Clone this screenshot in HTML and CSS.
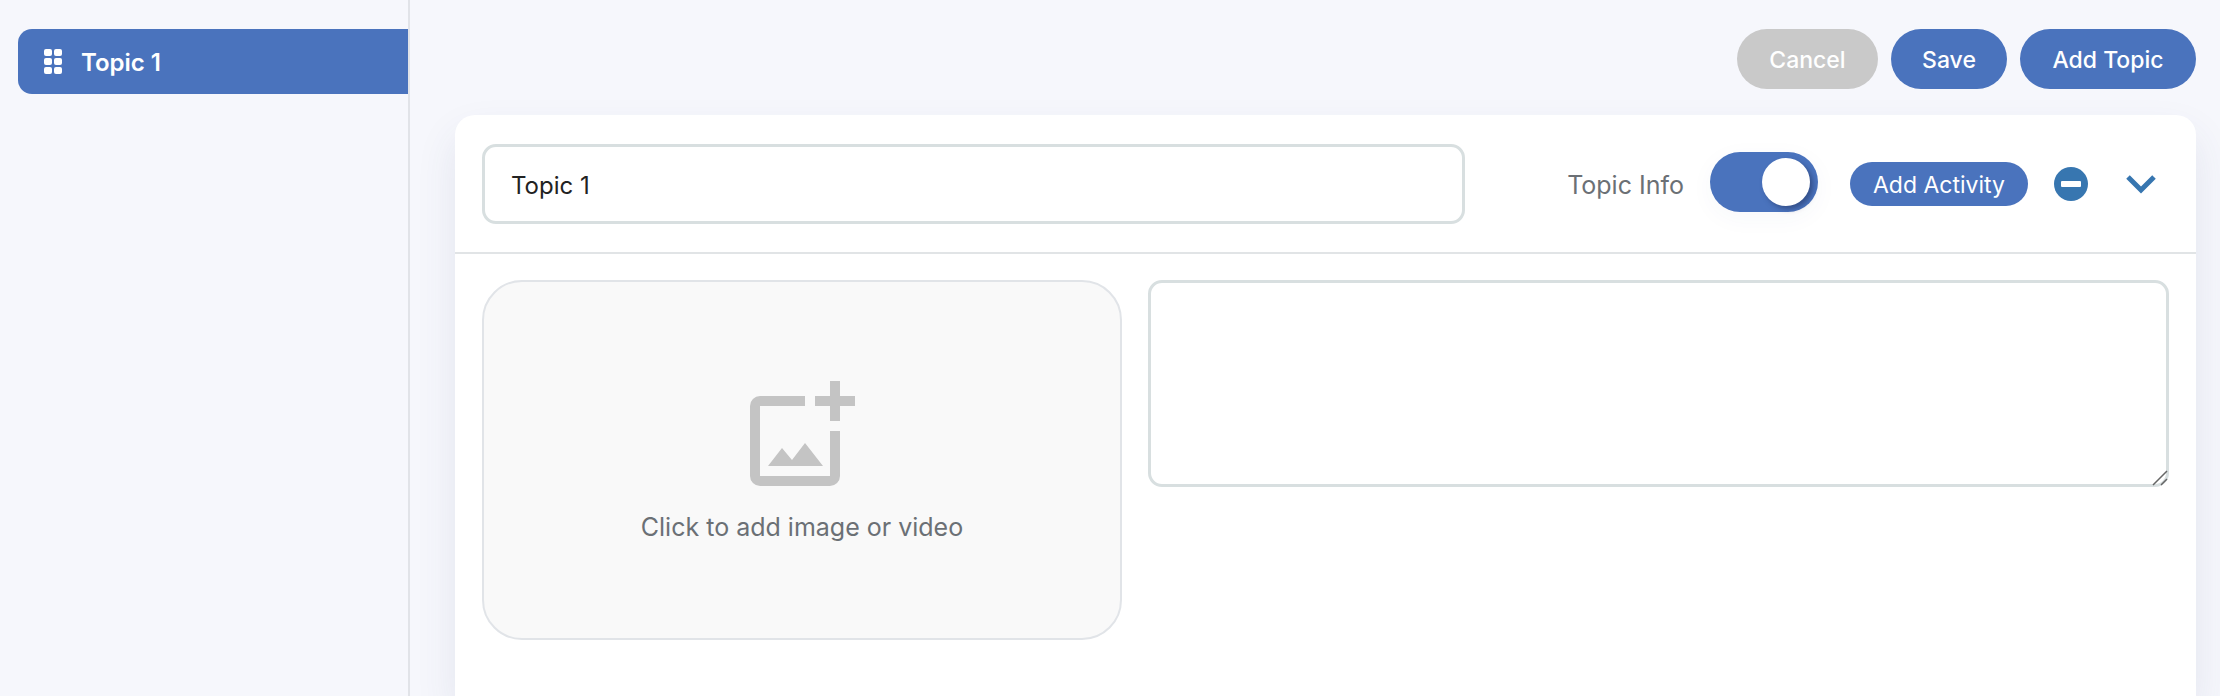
FILE: index.html

```html
<!DOCTYPE html>
<html lang="en">
<head>
    <meta charset="UTF-8">
    <meta name="viewport" content="width=device-width, initial-scale=1.0">
    <title>Topics</title>
    <link rel="stylesheet" href="styles.css">
</head>
<body>
    <!-- Topic list -->
    <div class="sidebar">
        <div class="topic-item">
            <span class="grip">
                <i></i><i></i><i></i><i></i><i></i><i></i>
            </span>
            <span class="topic-label">Topic 1</span>
        </div>
    </div>

    <div class="main-content">
        <div class="toolbar">
            <button class="btn btn-muted cancel">Cancel</button>
            <button class="btn save">Save</button>
            <button class="btn add-topic">Add Topic</button>
        </div>

        <div class="card">
            <div class="card-head">
                <input type="text" class="topic-name" value="Topic 1">
                <span class="info-label">Topic Info</span>
                <span class="toggle"><span class="knob"></span></span>
                <button class="btn-small">Add Activity</button>
                <svg class="remove-icon" width="34" height="34" viewBox="0 0 34 34">
                    <circle cx="17" cy="17" r="17" fill="#3776b0"/>
                    <rect x="7" y="14" width="20" height="6" rx="1" fill="#fff"/>
                </svg>
                <svg class="chevron-icon" width="30" height="20" viewBox="0 0 30 20">
                    <path d="M2 3 L15 16 L28 3" fill="none" stroke="#3776b0" stroke-width="5"/>
                </svg>
            </div>

            <div class="card-body">
                <div class="upload-box">
                    <svg width="105" height="105" viewBox="0 0 105 105">
                        <path fill="#c4c4c4" d="M55 15 V25 H10 V95 H80 V50 H90 V95 a10 10 0 0 1 -10 10 H10 a10 10 0 0 1 -10 -10 V25 a10 10 0 0 1 10 -10 Z"/>
                        <path fill="#c4c4c4" d="M80 0 H90 V15 H105 V25 H90 V40 H80 V25 H65 V15 H80 Z"/>
                        <path fill="#c4c4c4" d="M18 85 L32 67 L42 79 L55 62 L73 85 Z"/>
                    </svg>
                    <span class="upload-text">Click to add image or video</span>
                </div>
                <div class="description-wrap">
                    <textarea class="description"></textarea>
                    <svg class="resize-grip" width="18" height="18" viewBox="0 0 18 18">
                        <path d="M2 16 L16 2 M10 16 L16 10" stroke="#666" stroke-width="1.5"/>
                    </svg>
                </div>
            </div>
        </div>
    </div>
</body>
</html>
```

FILE: styles.css

```css
body {
    display: flex;
    margin: 0;
    height: 100vh;
    overflow: hidden;
    background-color: #f6f7fc;
    font-family: Inter, "Liberation Sans", sans-serif;
}

.sidebar {
    width: 408px;
    flex-shrink: 0;
    padding-top: 29px;
    padding-left: 18px;
    box-sizing: border-box;
}

.topic-item {
    display: flex;
    align-items: center;
    gap: 19px;
    height: 65px;
    padding-left: 26px;
    background-color: #4a73bd;
    border-radius: 14px 0 0 14px;
    color: white;
    font-size: 24px;
    font-weight: 600;
}

.topic-label {
    padding-top: 2px;
}

.grip {
    display: grid;
    grid-template-columns: 8px 8px;
    grid-auto-rows: 7px;
    gap: 2px;
}

.grip i {
    background-color: white;
    border-radius: 2px;
}

.main-content {
    display: flex;
    flex-direction: column;
    flex-grow: 1;
    box-sizing: border-box;
    border-left: 2px solid #e1e3e8;
    padding: 29px 24px 0 45px;
}

.toolbar {
    display: flex;
    justify-content: flex-end;
    gap: 13px;
}

.btn {
    height: 60px;
    border: none;
    border-radius: 30px;
    background-color: #4a73bd;
    color: white;
    font-family: inherit;
    font-size: 23px;
    font-weight: 500;
    padding: 2px 0 0;
}

.btn-muted {
    background-color: #c9c9c9;
}

.cancel {
    width: 141px;
}

.save {
    width: 116px;
}

.add-topic {
    width: 176px;
}

.card {
    flex-grow: 1;
    margin-top: 26px;
    background-color: white;
    border-radius: 20px 20px 0 0;
    box-shadow: 0 20px 40px rgba(60, 70, 120, 0.1);
}

.card-head {
    display: flex;
    align-items: center;
    padding: 29px 27px 28px;
    border-bottom: 2px solid #e1e4e6;
}

.topic-name {
    width: 983px;
    height: 80px;
    box-sizing: border-box;
    border: 3px solid #d8dfe0;
    border-radius: 14px;
    padding: 2px 26px 0;
    font-family: inherit;
    font-size: 24px;
    color: #222;
    outline: none;
}

.info-label {
    margin-left: auto;
    margin-right: 26px;
    padding-top: 2px;
    color: #6b7075;
    font-size: 25px;
}

.toggle {
    display: flex;
    align-items: center;
    justify-content: flex-end;
    width: 108px;
    height: 60px;
    margin-bottom: 4px;
    padding-right: 8px;
    box-sizing: border-box;
    border-radius: 30px;
    background-color: #4a73bd;
    box-shadow: 0 6px 24px rgba(60, 70, 120, 0.04);
}

.knob {
    width: 48px;
    height: 48px;
    border-radius: 50%;
    background-color: white;
    box-shadow: 3px 3px 5px rgba(30, 45, 90, 0.5);
}

.btn-small {
    width: 178px;
    height: 44px;
    margin-left: 32px;
    border: none;
    border-radius: 22px;
    background-color: #4a73bd;
    color: white;
    font-family: inherit;
    font-size: 23px;
    padding: 2px 0 0;
}

.remove-icon {
    margin-left: 26px;
}

.chevron-icon {
    margin-left: 38px;
    margin-right: 13px;
}

.card-body {
    display: flex;
    align-items: flex-start;
    gap: 26px;
    padding: 26px 27px;
}

.upload-box {
    display: flex;
    flex-direction: column;
    align-items: center;
    width: 640px;
    height: 360px;
    flex-shrink: 0;
    box-sizing: border-box;
    padding-top: 99px;
    border: 2px solid #e1e4e8;
    border-radius: 40px;
    background-color: #f9f9f9;
}

.upload-text {
    margin-top: 26px;
    color: #6b7075;
    font-size: 25px;
}

.description-wrap {
    position: relative;
    display: flex;
    flex-grow: 1;
}

.description {
    flex-grow: 1;
    height: 207px;
    box-sizing: border-box;
    border: 3px solid #d8dfe0;
    border-radius: 14px;
    outline: none;
    resize: none;
}

.resize-grip {
    position: absolute;
    right: 0;
    bottom: 0;
}
```
